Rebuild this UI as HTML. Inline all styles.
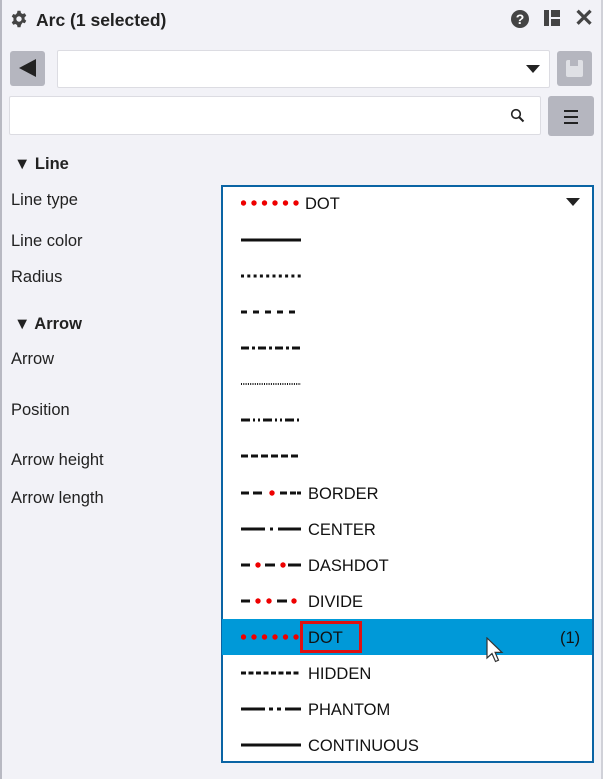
<!DOCTYPE html>
<html><head><meta charset="utf-8"><style>
*{margin:0;padding:0;box-sizing:border-box}
body{width:603px;height:779px;background:#f2f2f7;font-family:"Liberation Sans",sans-serif;position:relative;overflow:hidden;color:#222}
.a{position:absolute}
.lbl{position:absolute;left:11px;font-size:16.5px;color:#222}
.hd{position:absolute;left:14px;font-size:16.5px;font-weight:bold;color:#222}
.row{position:absolute;left:223px;width:369px;height:36px}
.row span{position:absolute;left:85px;top:10px;font-size:16.5px;color:#111}
</style></head><body>
<div class="a" style="left:0;top:0;width:2px;height:779px;background:#b8b9c2"></div>
<div class="a" style="left:601px;top:0;width:2px;height:779px;background:#d0d1d8"></div>
<svg class="a" style="left:10px;top:10px" width="18" height="18" viewBox="0 0 24 24"><path fill="#444" d="M10 1h4l.6 3 2.2 1.3 2.9-1 2 3.4-2.3 2v2.6l2.3 2-2 3.4-2.9-1L14.6 20 14 23h-4l-.6-3-2.2-1.3-2.9 1-2-3.4 2.3-2V10.7L2.3 8.7l2-3.4 2.9 1L9.4 4z"/><circle cx="12" cy="12" r="3.6" fill="#f2f2f7"/></svg>
<div class="a" style="left:36px;top:10px;font-size:17.5px;font-weight:bold;color:#222">Arc (1 selected)</div>
<svg class="a" style="left:510px;top:9px" width="20" height="20" viewBox="0 0 20 20"><circle cx="10" cy="10" r="9" fill="#444"/><text x="10" y="15" font-size="14" font-weight="bold" fill="#fff" text-anchor="middle" font-family="Liberation Sans">?</text></svg>
<div class="a" style="left:544px;top:10px;width:5px;height:16px;background:#444"></div>
<div class="a" style="left:551px;top:10px;width:9px;height:7px;background:#444"></div>
<div class="a" style="left:551px;top:19px;width:9px;height:7px;background:#444"></div>
<div class="a" style="left:574px;top:4px;font-size:24px;font-weight:bold;color:#444">✕</div>
<div class="a" style="left:10px;top:51px;width:35px;height:35px;background:#b5b6bf;border-radius:3px"></div>
<div class="a" style="left:19px;top:59px;width:0;height:0;border-top:9px solid transparent;border-bottom:9px solid transparent;border-right:17px solid #222"></div>
<div class="a" style="left:57px;top:50px;width:493px;height:38px;background:#fff;border:1px solid #dcdce2;border-radius:2px"></div>
<div class="a" style="left:526px;top:65px;border-left:7px solid transparent;border-right:7px solid transparent;border-top:8px solid #222"></div>
<div class="a" style="left:557px;top:51px;width:35px;height:35px;background:#b5b6bf;border-radius:3px"></div>
<div class="a" style="left:566px;top:60px;width:17px;height:17px;background:#dfe0e5;border-radius:2px"></div>
<div class="a" style="left:570px;top:60px;width:8px;height:6px;background:#b5b6bf"></div>
<div class="a" style="left:9px;top:96px;width:532px;height:39px;background:#fff;border:1px solid #dcdce2;border-radius:2px"></div>
<svg class="a" style="left:510px;top:108px" width="15" height="15" viewBox="0 0 15 15"><circle cx="6" cy="6" r="4.3" fill="none" stroke="#222" stroke-width="1.6"/><path d="M9 9l4.5 4.5" stroke="#222" stroke-width="2"/></svg>
<div class="a" style="left:548px;top:96px;width:46px;height:40px;background:#b5b6bf;border-radius:3px"></div>
<div class="a" style="left:564px;top:110px;width:14px;height:2px;background:#222"></div>
<div class="a" style="left:564px;top:116px;width:14px;height:2px;background:#222"></div>
<div class="a" style="left:564px;top:122px;width:14px;height:2px;background:#222"></div>
<div class="hd" style="top:155px">▼ Line</div>
<div class="lbl" style="top:191px">Line type</div>
<div class="lbl" style="top:232px">Line color</div>
<div class="lbl" style="top:268px">Radius</div>
<div class="hd" style="top:315px">▼ Arrow</div>
<div class="lbl" style="top:350px">Arrow</div>
<div class="lbl" style="top:401px">Position</div>
<div class="lbl" style="top:451px">Arrow height</div>
<div class="lbl" style="top:489px">Arrow length</div>
<div class="a" style="left:221px;top:185px;width:373px;height:578px;background:#fff;border:2px solid #0a64a4"></div>
<div class="row" style="top:185px"><span style="left:82px">DOT</span></div>
<div class="a" style="left:566px;top:198px;border-left:7px solid transparent;border-right:7px solid transparent;border-top:8px solid #222"></div>
<svg class="a" style="left:241px;top:230px" width="62" height="240"><g stroke="#111" stroke-width="3" fill="none">
<path d="M0 10h60"/>
<path d="M0 46h60" stroke-dasharray="3 3.3"/>
<path d="M0 82h55" stroke-dasharray="6 6"/>
<path d="M0 118h60" stroke-dasharray="8 3 3 3"/>
<path d="M0 154h60" stroke-width="2" stroke-dasharray="1 1.3"/>
<path d="M0 190h58" stroke-dasharray="9 3 2 3 2 3"/>
<path d="M0 226h60" stroke-dasharray="7 3"/>
</g></svg>
<div class="a" style="left:222px;top:619px;width:370px;height:36px;background:#0099d8"></div>
<svg class="a" style="left:241px;top:180px" width="62" height="590"><g stroke="#111" stroke-width="3" fill="none">
<path d="M0 313h8M12 313h9M39 313h7M49 313h6M56 313h4"/>
<path d="M0 349h24M29 349h3M37 349h23"/>
<path d="M0 385h9M24 385h10M47 385h13"/>
<path d="M0 421h9M36 421h10"/>
<path d="M0 493h60" stroke-dasharray="5 2.5"/>
<path d="M0 529h24M28 529h4M36 529h4M44 529h16"/>
<path d="M0 565h60"/>
</g><g fill="#e00">
<circle cx="2.5" cy="23" r="2.7"/><circle cx="13" cy="23" r="2.7"/><circle cx="23.5" cy="23" r="2.7"/><circle cx="34" cy="23" r="2.7"/><circle cx="44.5" cy="23" r="2.7"/><circle cx="55" cy="23" r="2.7"/>
<circle cx="31" cy="313" r="2.7"/>
<circle cx="17" cy="385" r="2.7"/><circle cx="42" cy="385" r="2.7"/>
<circle cx="17" cy="421" r="2.7"/><circle cx="28" cy="421" r="2.7"/><circle cx="53" cy="421" r="2.7"/>
<circle cx="2.5" cy="457" r="2.7"/><circle cx="13" cy="457" r="2.7"/><circle cx="23.5" cy="457" r="2.7"/><circle cx="34" cy="457" r="2.7"/><circle cx="44.5" cy="457" r="2.7"/><circle cx="55" cy="457" r="2.7"/>
</g></svg>
<div class="row" style="top:475px"><span>BORDER</span></div>
<div class="row" style="top:511px"><span>CENTER</span></div>
<div class="row" style="top:547px"><span>DASHDOT</span></div>
<div class="row" style="top:583px"><span>DIVIDE</span></div>
<div class="row" style="top:619px"><span>DOT</span><span style="left:337px">(1)</span></div>
<div class="a" style="left:300px;top:621px;width:62px;height:32px;border:3px solid #e01010"></div>
<div class="row" style="top:655px"><span>HIDDEN</span></div>
<div class="row" style="top:691px"><span>PHANTOM</span></div>
<div class="row" style="top:727px"><span>CONTINUOUS</span></div>
<svg class="a" style="left:486px;top:637px" width="20" height="28" viewBox="0 0 20 28"><path d="M1 1v20l5-4.5 3.5 8 3-1.3-3.4-7.8H16z" fill="#fff" stroke="#333" stroke-width="1.2"/></svg>
</body></html>
